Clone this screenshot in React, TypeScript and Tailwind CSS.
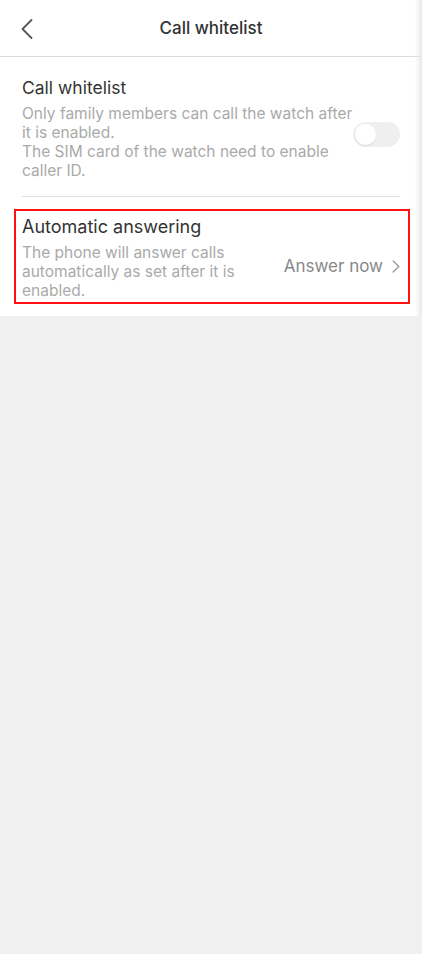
import React from "react";

const font = { fontFamily: 'Inter, "Liberation Sans", Arial, sans-serif' };

function Toggle() {
  return (
    <div className="relative mt-[18px] h-[25px] w-[47px] shrink-0 rounded-full bg-[#efefef]">
      <span className="absolute left-[2px] top-[2px] h-[21px] w-[21px] rounded-full bg-white shadow-[0_1px_2px_rgba(0,0,0,0.08)]" />
    </div>
  );
}

export default function App() {
  return (
    <div className="min-h-screen w-full bg-[#f0f0f0]" style={font}>
      <div className="relative bg-white">
        <header className="relative flex h-[57px] items-center justify-center border-b border-[#dcdcdc]">
          <button className="absolute left-[18px] top-[18px] flex h-[22px] w-[18px] items-center justify-center">
            <svg width="14" height="22" viewBox="0 0 14 22" fill="none">
              <path d="M11.5 2 L2.5 11 L11.5 20" stroke="#555" strokeWidth="1.8" strokeLinecap="round" strokeLinejoin="round" />
            </svg>
          </button>
          <h1 className="pt-[2px] text-[17px] font-medium text-[#333]">Call whitelist</h1>
        </header>

        <section className="px-[22px] pt-[19px] pb-[16px]">
          <h2 className="text-[17.5px] leading-[24px] text-[#333]">Call whitelist</h2>
          <div className="mt-[4px] flex items-start justify-between">
            <p className="text-[15.5px] leading-[19px] text-[#aaa]">
              Only family members can call the watch after
              <br />
              it is enabled.
              <br />
              The SIM card of the watch need to enable
              <br />
              caller ID.
            </p>
            <Toggle />
          </div>
        </section>

        <div className="mx-[22px] h-px bg-[#dddddd]" />

        <div className="pt-[12px] pb-[12px] pl-[14px] pr-[12px]">
          <div className="flex items-center justify-between border-2 border-[#f11] pt-[4px] pb-[2px] pl-[6px] pr-[8px]">
            <div>
              <h2 className="text-[18px] leading-[24px] text-[#333]">Automatic answering</h2>
              <p className="mt-[4px] text-[15.5px] leading-[19px] text-[#aaa]">
                The phone will answer calls
                <br />
                automatically as set after it is
                <br />
                enabled.
              </p>
            </div>
            <div className="mt-[18px] flex items-center gap-[9px]">
              <span className="text-[17px] text-[#888]">Answer now</span>
              <svg width="8" height="13" viewBox="0 0 8 13" fill="none">
                <path d="M1.2 1 L6.8 6.5 L1.2 12" stroke="#999" strokeWidth="1.3" strokeLinecap="round" strokeLinejoin="round" />
              </svg>
            </div>
          </div>
        </div>

        <div className="pointer-events-none absolute right-0 top-0 h-full w-[7px] bg-gradient-to-r from-transparent to-[#e9e9e9]" />
      </div>
    </div>
  );
}
